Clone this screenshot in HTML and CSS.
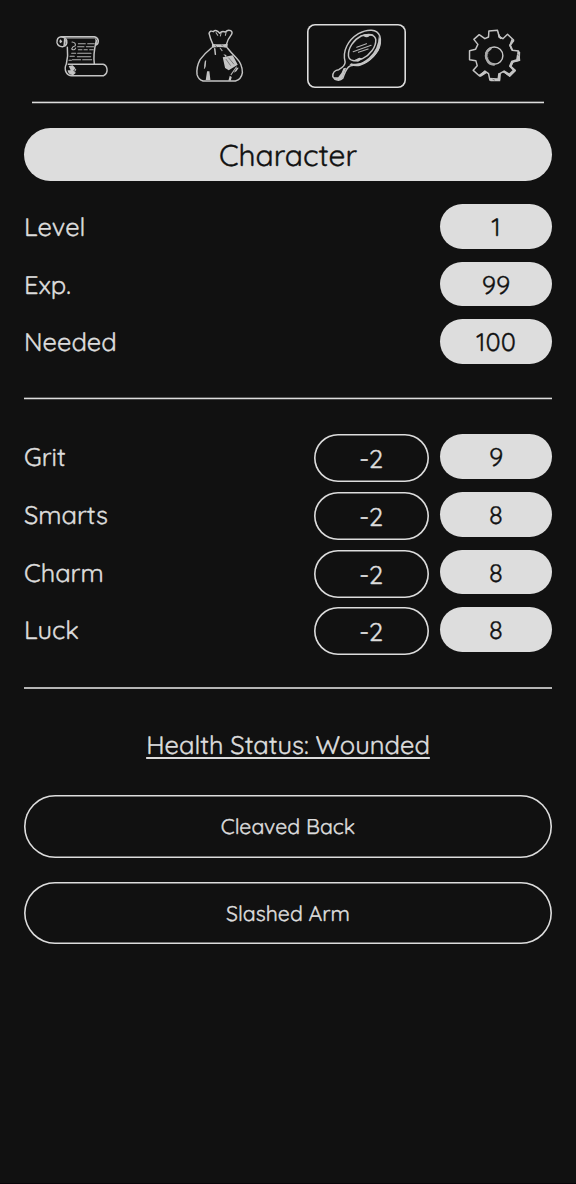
FILE: index.html
```
<!DOCTYPE html>
<html lang="en">
<head>
<meta charset="utf-8">
<title>Character</title>
<link rel="stylesheet" href="styles.css">
</head>
<body>
<main class="screen">
  <nav class="tabs">
    <a class="tab"><svg viewBox="-39 12 297.6 192">
      <path d="M48 50H148Q158 52 160 62Q160 72 153 75M153 66Q144 104 148 132M48 50Q35 52 36 68Q39 81 54 80Q68 76 65 61Q60 49 46 51M67 82Q70 106 64 132M64 132Q57 145 64 158Q69 167 80 167H176Q188 160 186 147Q184 135 174 133H70"/>
      <path class="thin" d="M58 54H150M81 66Q93 67 91 77Q82 79 80 87Q88 93 92 84M100 71H121M128 71H148M98 80H117M124 80H146M100 89H111M117 89H127M134 89H145M80 100H92M98 100H138M75 109H88M97 110H137M82 119H107M113 119H140M72 121H79M92 148Q84 143 82 153Q88 157 92 149"/>
      <path class="shade" d="M57 54L63 61L61 75L55 80M47 58Q40 63 46 70L52 65M71 138L83 136L91 144L84 154L93 158L84 166Q68 163 68 151L77 151ZM150 54L158 62L153 72"/>
    </svg></a>
    <a class="tab"><svg viewBox="-46.2 12 297.6 192">
      <path d="M82 72Q74 54 71 40Q74 30 84 35Q88 28 97 34L103 40Q109 31 120 36Q127 28 136 32Q144 37 136 47Q127 58 123 73M78 84Q60 98 44 119Q32 142 35 164Q39 179 53 183H150Q168 178 171 158Q171 132 153 114Q137 98 126 84M88 86L90 103"/>
      <path class="thin" d="M92 38L97 46M107 39L105 48M122 37L120 46M61 122L57 145M137 164L153 141M104 84L110 92"/>
      <path class="shade" d="M80 71Q102 75 127 71L126 84Q102 78 79 84ZM112 112L142 106L157 134L130 151L119 144Z"/>
      <path class="cut" d="M122 118L135 136M130 114L145 132M89 76L94 80M108 75L113 78"/>
      <path class="shade" d="M61 180L65 154L72 154L75 180ZM129 182L133 167L139 171L136 182ZM58 124L62 124L60 143L57 138ZM145 158L154 143L160 143L153 154ZM114 103L123 105L122 112Z"/>
    </svg></a>
    <a class="tab selected"><svg viewBox="21.6 18 297.6 192">
      <path d="M136 132C127 98 145 66 176 47C203 32 232 32 240 54C248 81 229 115 200 132C177 143 159 139 151 144C138 150 135 166 129 181C120 190 105 188 99 176C98 164 106 156 117 155C128 149 136 143 136 132Z"/>
      <path d="M146 114C144 90 162 65 184 54C208 46 226 50 228 65C229 87 211 111 188 122C166 133 148 129 146 114Z"/>
      <path class="thin" d="M171 88L200 77M160 101L214 82M176 103L205 93"/>
      <path class="shade" d="M237 54Q249 75 236 99Q214 132 180 144Q164 146 149 141L154 136Q180 143 207 119Q236 94 237 54ZM102 178L115 178L125 165L131 151L139 149L128 181Q114 194 102 178ZM181 53Q205 43 222 50L210 53Q201 62 192 55ZM160 128L178 119L188 121L175 131Z"/>
    </svg></a>
    <a class="tab"><svg viewBox="-45.6 12 297.6 192">
      <path d="M86 33L112 31L117 51L128 56L142 43L160 60L149 76L156 91L175 93L178 121L158 126L151 138L165 151L148 168L130 154L120 160L118 180L89 180L85 161L74 153L58 168L39 151L51 137L47 122L28 119V92L46 88L53 73L41 58L57 44L74 56L85 51Z"/>
      <circle cx="102" cy="107" r="26"/>
      <path d="M91 85Q70 99 82 121Q87 132 101 133" class="heavy"/>
      <path class="shade" d="M112 31L120 48L127 54L121 58L115 52ZM154 57L163 62L153 76L159 90L153 90L147 76ZM172 92L180 96L179 122L160 127L154 140L168 152L149 171L128 156L132 151L147 160L157 151L146 139L153 122L168 118ZM120 158V184L91 184L86 173L112 175L114 160ZM73 153L81 158L61 171L56 164Z"/>
      <path class="cut" d="M172 103L176 106M98 178L103 180M84 99L87 102M81 109L85 112"/>
    </svg></a>
  </nav>
  <div class="rule rule-top"></div>
  <h1 class="title"><span>Character</span></h1>
  <section class="rows">
    <div class="row"><span class="label">Level</span><b class="value">1</b></div>
    <div class="row"><span class="label">Exp.</span><b class="value">99</b></div>
    <div class="row"><span class="label">Needed</span><b class="value">100</b></div>
  </section>
  <div class="rule"></div>
  <section class="rows stats">
    <div class="row"><span class="label">Grit</span><b class="mod">-2</b><b class="value">9</b></div>
    <div class="row"><span class="label">Smarts</span><b class="mod">-2</b><b class="value">8</b></div>
    <div class="row"><span class="label">Charm</span><b class="mod">-2</b><b class="value">8</b></div>
    <div class="row"><span class="label">Luck</span><b class="mod">-2</b><b class="value">8</b></div>
  </section>
  <div class="rule rule-even"></div>
  <h2 class="health"><span>Health Status: Wounded</span></h2>
  <div class="wounds">
    <div class="wound">Cleaved Back</div>
    <div class="wound">Slashed Arm</div>
  </div>
</main>
</body>
</html>
```
FILE: styles.css
```
* { box-sizing: border-box; }
body { margin: 0; background: #111; color: #ddd; font: 400 25.5px/32px Quicksand, Lato, sans-serif; -webkit-text-stroke: .4px currentColor; text-rendering: geometricPrecision; }
.screen { height: 1184px; padding: 24px 24px 0; border-bottom: 1px solid #080408; overflow: hidden; }
.tabs { display: flex; gap: 38.4px; padding: 0 8px; height: 64px; }
.tab { flex: 1; height: 64px; border-radius: 8px; }
.selected { box-shadow: inset 0 0 0 1.6px #ddd; }
.tab svg { display: block; width: 100%; height: 64px; fill: none; stroke: #c4c4c4; stroke-width: 4.4; stroke-linecap: round; stroke-linejoin: round; }
.tab .thin { stroke-width: 3.2; stroke: #b0b0b0; }
.tab .heavy { stroke-width: 8; stroke: #aaa; }
.tab .shade { fill: #c4c4c4; stroke: none; }
.tab .cut { stroke: #555; stroke-width: 2; }
.rule { height: 3px; background: linear-gradient(#555 0 1px, #ddd 1px 2px, #444 2px); }
.rule-top { margin: 13px 8px 0; }
.rule-even { height: 2px; background: #b5b5b5; }
.title { margin: 24px 0 0; height: 52.8px; border-radius: 26.4px; background: #ddd; color: #111; font-size: 30px; line-height: 55px; font-weight: 400; text-align: center; }
.rows { display: flex; flex-direction: column; gap: 12.8px; margin: 23.2px 0 33px; }
.row { display: flex; align-items: flex-start; height: 44.8px; }
.label { flex: 1; line-height: 47px; }
.value { width: 112px; height: 44.8px; border-radius: 22.4px; background: #ddd; color: #111; font-weight: 400; line-height: 47px; text-align: center; }
.mod { width: 115.2px; height: 48px; margin-right: 11.2px; border-radius: 24px; box-shadow: inset 0 0 0 1.6px #ddd; font-weight: 400; line-height: 50px; text-align: center; }
.stats { margin: 34.4px 0 35px; }
.health { margin: 40px 0 0; font-size: 25.5px; line-height: 32px; font-weight: 400; text-align: center; text-decoration: underline; text-decoration-thickness: 2px; text-underline-offset: 3px; text-decoration-skip-ink: none; }
.wounds { display: flex; flex-direction: column; gap: 24px; margin-top: 34.2px; }
.wound { height: 62.4px; border-radius: 31.2px; box-shadow: inset 0 0 0 1.6px #ddd; font-size: 21.3px; line-height: 65px; text-align: center; }
```
